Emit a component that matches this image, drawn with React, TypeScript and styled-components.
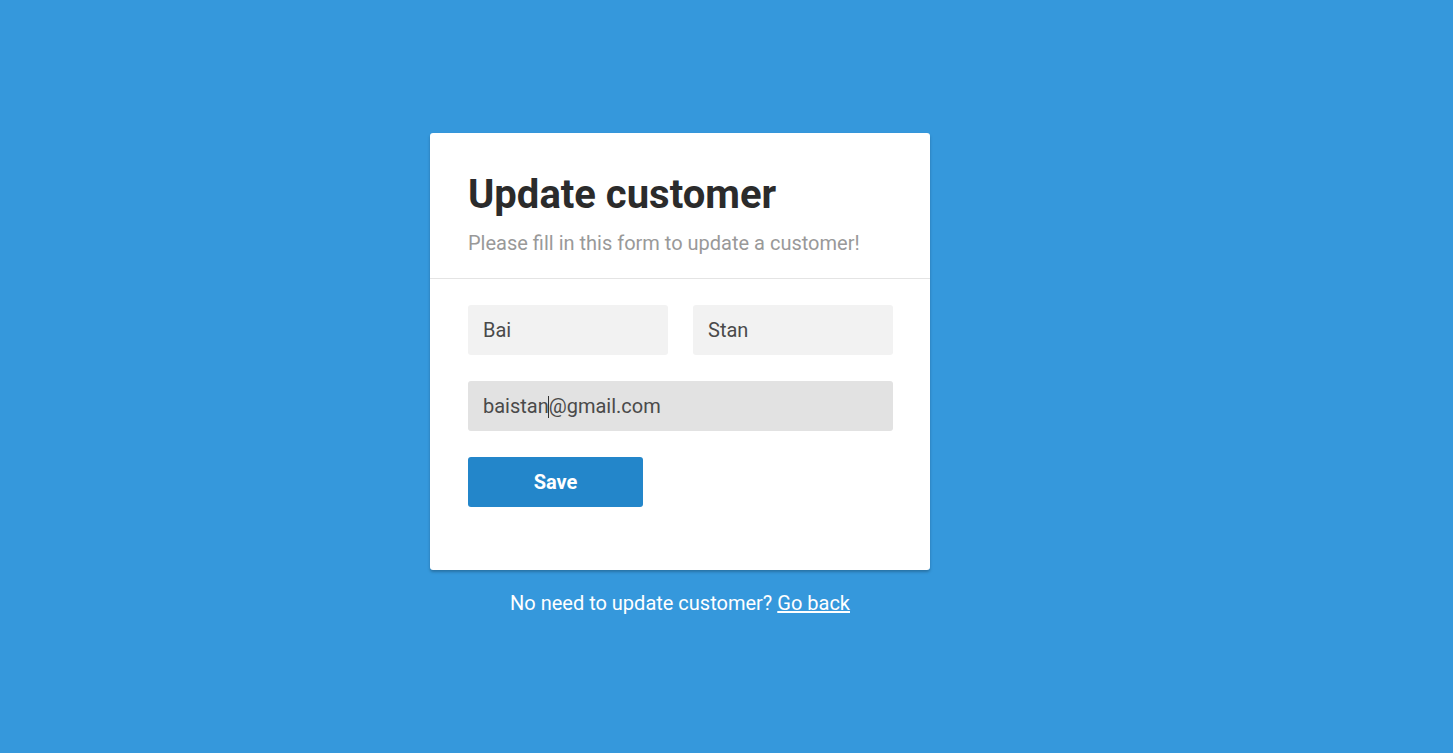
import styled, { createGlobalStyle } from 'styled-components'

const GlobalStyle = createGlobalStyle`
  html, body {
    margin: 0;
    padding: 0;
    background: #3598dc;
    font-family: Roboto, "Liberation Sans", sans-serif;
  }
  * { box-sizing: border-box; }
`

const Page = styled.main`
  width: 1360px;
  min-height: 100vh;
  display: flex;
  flex-direction: column;
  align-items: center;
  padding-top: 133px;
`

const Card = styled.section`
  width: 500px;
  background: #fff;
  border-radius: 3px;
  box-shadow: 0 2px 3px rgba(0, 0, 0, 0.25);
`

const Header = styled.header`
  padding: 38px 38px 23px;
  border-bottom: 1px solid #e4e4e4;
`

const Title = styled.h1`
  margin: 0;
  font-size: 40px;
  line-height: 48px;
  font-weight: 700;
  color: #2b2b2b;
`

const Subtitle = styled.p`
  margin: 12px 0 0;
  font-size: 20px;
  line-height: 24px;
  color: #999;
`

const Form = styled.form`
  padding: 26px 37px 63px 38px;
  display: flex;
  flex-direction: column;
  gap: 26px;
`

const Row = styled.div`
  display: flex;
  gap: 25px;
`

const FieldWrap = styled.div`
  position: relative;
  flex: 1 1 0;
  min-width: 0;
  display: flex;
`

const Field = styled.input<{ $focused?: boolean }>`
  flex: 1;
  width: 100%;
  min-width: 0;
  height: 50px;
  border: none;
  border-radius: 3px;
  padding: 0 15px;
  font-family: inherit;
  font-size: 20px;
  color: #4a4a4a;
  background: ${(p) => (p.$focused ? '#e2e2e2' : '#f2f2f2')};
  outline: none;
`

/* text cursor as it shows in the focused email field */
const Caret = styled.span`
  position: absolute;
  left: 80px;
  top: 15px;
  width: 1px;
  height: 22px;
  background: #333;
  pointer-events: none;
`

const SaveButton = styled.button`
  width: 175px;
  height: 50px;
  border: none;
  border-radius: 3px;
  background: #2386ca;
  color: #fff;
  font-family: inherit;
  font-size: 20px;
  font-weight: 700;
  cursor: pointer;
`

const Footer = styled.p`
  margin: 21px 0 0;
  font-size: 20px;
  line-height: 24px;
  color: #fff;

  a {
    color: #fff;
    text-decoration: underline;
  }
`

export default function App() {
  return (
    <>
      <GlobalStyle />
      <Page>
        <Card>
          <Header>
            <Title>Update customer</Title>
            <Subtitle>Please fill in this form to update a customer!</Subtitle>
          </Header>
          <Form onSubmit={(e) => e.preventDefault()}>
            <Row>
              <FieldWrap>
                <Field defaultValue="Bai" />
              </FieldWrap>
              <FieldWrap>
                <Field defaultValue="Stan" />
              </FieldWrap>
            </Row>
            <Row>
              <FieldWrap>
                <Field $focused defaultValue="baistan@gmail.com" />
                <Caret />
              </FieldWrap>
            </Row>
            <div>
              <SaveButton type="submit">Save</SaveButton>
            </div>
          </Form>
        </Card>
        <Footer>
          No need to update customer? <a href="#">Go back</a>
        </Footer>
      </Page>
    </>
  )
}
